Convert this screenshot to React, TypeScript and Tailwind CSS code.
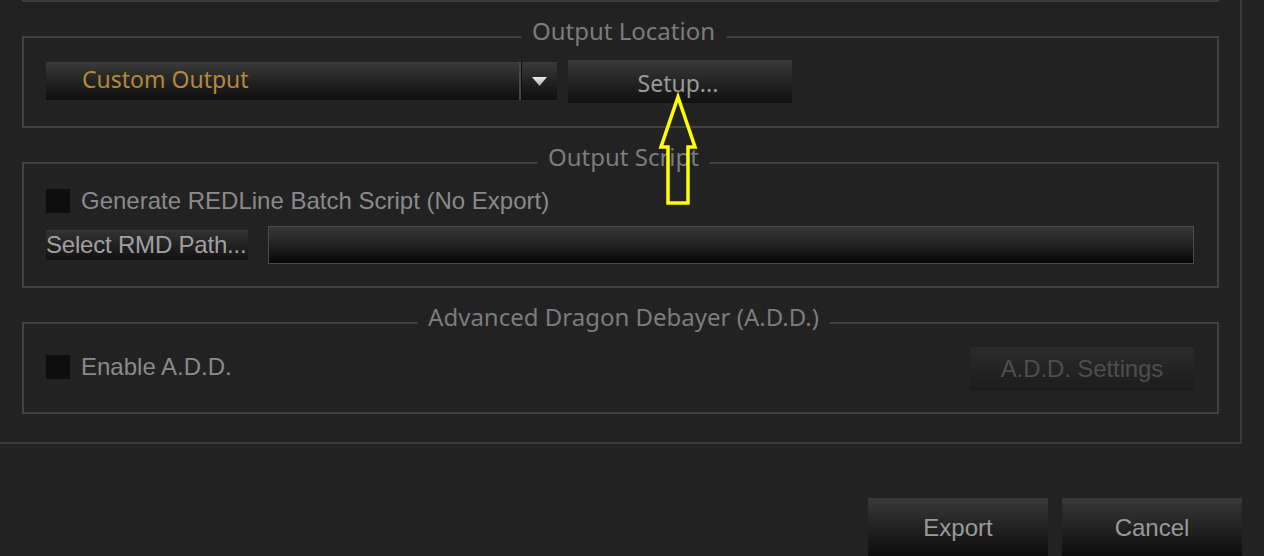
import React from "react";

const ARIAL = "font-['Liberation_Sans',Arial,sans-serif]";
const UI = "font-['Noto_Sans','Open_Sans',sans-serif]";

function Group({
  title,
  className,
  children,
}: {
  title: string;
  className: string;
  children: React.ReactNode;
}) {
  return (
    <div className={`relative border-2 border-[#424242] ${className}`}>
      <span
        className={`absolute left-1/2 -top-[19px] ml-[3px] -translate-x-1/2 whitespace-nowrap bg-[#222222] px-[11px] text-[24px] leading-[24px] text-[#7c7c7c] ${UI}`}
      >
        {title}
      </span>
      {children}
    </div>
  );
}

function Check({ label }: { label: string }) {
  return (
    <div className="flex items-center gap-[11px]">
      <div className="h-[24px] w-[24px] bg-[#0e0e0e]" />
      <span className={`text-[24px] leading-[24px] text-[#8a8a8a] ${ARIAL}`}>{label}</span>
    </div>
  );
}

export default function App() {
  return (
    <div className="relative h-[556px] w-[1264px] overflow-hidden bg-[#222222]">
      <div className="w-[1242px] border-b-2 border-r-2 border-[#393939] pb-[28px] pl-[22px] pr-[21px]">
        <div className="h-[2px] w-[1197px] bg-[#3c3c3c]" />

        <Group title="Output Location" className="mt-[34px] h-[92px] px-[22px]">
          <div className="flex h-full items-center gap-[11px] pb-[2px]">
            <div className="flex h-[38px] w-[511px] items-stretch bg-gradient-to-b from-[#3a3a3a] to-[#0e0e0e]">
              <div className={`flex flex-1 items-center pb-[4px] pl-[36px] text-[23px] text-[#b3893a] ${UI}`}>
                Custom Output
              </div>
              <div className="w-[2px] bg-[#474747]" />
              <div className="w-[1px] bg-[#0e0e0e]" />
              <div className="flex w-[35px] items-center justify-center">
                <svg width="15" height="9" viewBox="0 0 15 9">
                  <defs>
                    <linearGradient id="tri" x1="0" y1="0" x2="0" y2="1">
                      <stop offset="0" stopColor="#ececec" />
                      <stop offset="1" stopColor="#a8a8a8" />
                    </linearGradient>
                  </defs>
                  <polygon points="0,0 15,0 7.5,9" fill="url(#tri)" />
                </svg>
              </div>
            </div>
            <div
              className={`flex h-[43px] w-[224px] items-center justify-center bg-gradient-to-b from-[#393939] to-[#101010] pt-[4px] text-[23px] text-[#9a9a9a] ${UI}`}
            >
              <span className="-ml-[4px]">Setup...</span>
            </div>
          </div>
        </Group>

        <Group title="Output Script" className="mt-[34px] h-[126px] pl-[22px] pr-[23px] pt-[24px]">
          <div className="relative top-[1px]">
            <Check label="Generate REDLine Batch Script (No Export)" />
          </div>
          <div className="mt-[14px] flex items-center gap-[20px]">
            <div
              className={`flex h-[30px] w-[202px] items-center whitespace-nowrap bg-gradient-to-b from-[#333333] to-[#121212] text-[24px] tracking-[-0.2px] text-[#a0a0a0] ${ARIAL}`}
            >
              Select RMD Path...
            </div>
            <div className="h-[38px] flex-1 border border-[#4b4b4b] bg-gradient-to-b from-[#363636] via-[#222222] to-[#060606]" />
          </div>
        </Group>

        <Group title="Advanced Dragon Debayer (A.D.D.)" className="mt-[34px] h-[92px] pl-[22px] pr-[23px]">
          <div className="flex h-full items-center justify-between">
            <div className="-mt-[2px]">
              <Check label="Enable A.D.D." />
            </div>
            <div
              className={`mt-[2px] flex h-[44px] w-[224px] items-center justify-center bg-gradient-to-b from-[#2b2b2b] to-[#1c1c1c] text-[24px] tracking-[-0.1px] text-[#4e4e4e] ${ARIAL}`}
            >
              A.D.D. Settings
            </div>
          </div>
        </Group>
      </div>

      <div className="flex justify-end gap-[14px] pr-[22px] pt-[54px]">
        {["Export", "Cancel"].map((t) => (
          <div
            key={t}
            className={`flex h-[60px] w-[180px] items-center justify-center bg-gradient-to-b from-[#393939] to-[#0c0c0c] text-[24px] text-[#9a9a9a] ${ARIAL}`}
          >
            {t}
          </div>
        ))}
      </div>

      <svg
        className="pointer-events-none absolute left-0 top-0"
        width="1264"
        height="556"
        viewBox="0 0 1264 556"
      >
        <polygon
          points="678,97 695,147 688,147 688,203 668,203 668,147 661,147"
          fill="none"
          stroke="#ffff00"
          strokeWidth="3.5"
          strokeLinejoin="miter"
        />
      </svg>
    </div>
  );
}
